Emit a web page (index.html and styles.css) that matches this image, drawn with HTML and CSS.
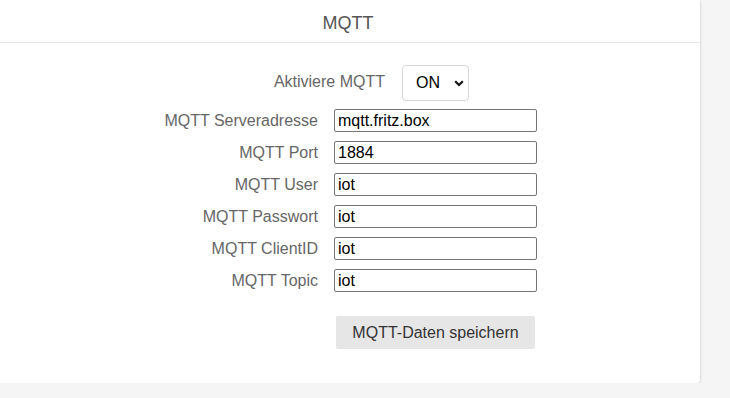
FILE: index.html
```html
<!DOCTYPE html>
<html lang="de">
<head>
<meta charset="utf-8">
<title>MQTT</title>
<link rel="stylesheet" href="styles.css">
</head>
<body>
<div class="card">
  <div class="card-header">MQTT</div>
  <div class="card-body">
    <div class="toggle-row">
      <label class="toggle-label" for="en">Aktiviere MQTT</label>
      <div class="select-wrap">
        <select id="en" class="select"><option>ON</option><option>OFF</option></select>
        <svg class="chev" width="10" height="7" viewBox="0 0 10 7"><path d="M1.2 1.2 L5 5 L8.8 1.2" fill="none" stroke="#111" stroke-width="2.2"/></svg>
      </div>
    </div>
    <div class="form">
      <label class="lbl">MQTT Serveradresse</label><input class="inp" value="mqtt.fritz.box">
      <label class="lbl">MQTT Port</label><input class="inp" value="1884">
      <label class="lbl">MQTT User</label><input class="inp" value="iot">
      <label class="lbl">MQTT Passwort</label><input class="inp" value="iot">
      <label class="lbl">MQTT ClientID</label><input class="inp" value="iot">
      <label class="lbl">MQTT Topic</label><input class="inp" value="iot">
      <span></span><div class="btn-cell"><button class="btn">MQTT-Daten speichern</button></div>
    </div>
  </div>
</div>
</body>
</html>
```
FILE: styles.css
```css
html, body {
  margin: 0;
  padding: 0;
  background: #f5f5f5;
  font-family: "Liberation Sans", Arial, sans-serif;
}
.card {
  margin-left: -4px;
  width: 704px;
  height: 383px;
  background: #fff;
  border-radius: 0 0 3px 3px;
  box-shadow: 0 1px 3px rgba(0,0,0,0.22);
  box-sizing: border-box;
}
.card-header {
  height: 43px;
  box-sizing: border-box;
  padding-top: 13px;
  text-align: center;
  font-size: 18px;
  line-height: 20px;
  color: #555;
  border-bottom: 1px solid #e8e8e8;
}
.card-body {
  padding-top: 21px;
}
.toggle-row {
  display: flex;
  align-items: center;
  height: 37px;
}
.toggle-label {
  width: 389px;
  text-align: right;
  font-size: 16px;
  color: #666;
  padding-bottom: 2px;
}
.select-wrap {
  position: relative;
  margin-left: 17px;
}
.select {
  appearance: none;
  -webkit-appearance: none;
  width: 67px;
  height: 36px;
  box-sizing: border-box;
  border: 1px solid #d6d6d6;
  border-radius: 4px;
  background: #fff;
  font-family: "Liberation Sans", Arial, sans-serif;
  font-size: 16px;
  color: #000;
  padding: 0 0 0 13px;
  display: block;
}
.chev {
  position: absolute;
  left: 52px;
  top: 15px;
  pointer-events: none;
}
.form {
  display: grid;
  grid-template-columns: 322px 203px;
  column-gap: 16px;
  row-gap: 9px;
  margin-top: 8px;
  align-items: center;
}
.lbl {
  text-align: right;
  font-size: 16px;
  color: #666;
}
.inp {
  width: 203px;
  height: 23px;
  box-sizing: border-box;
  border: 1px solid #767676;
  border-radius: 2px;
  padding: 0 3px;
  font-family: "Liberation Sans", Arial, sans-serif;
  font-size: 16px;
  color: #000;
  margin: 0;
}
.btn-cell {
  padding-top: 15px;
  padding-left: 2px;
}
.btn {
  width: 199px;
  height: 33px;
  border: none;
  border-radius: 2px;
  background: #e6e6e6;
  color: #333;
  font-family: "Liberation Sans", Arial, sans-serif;
  font-size: 16px;
  padding: 0;
}
```
